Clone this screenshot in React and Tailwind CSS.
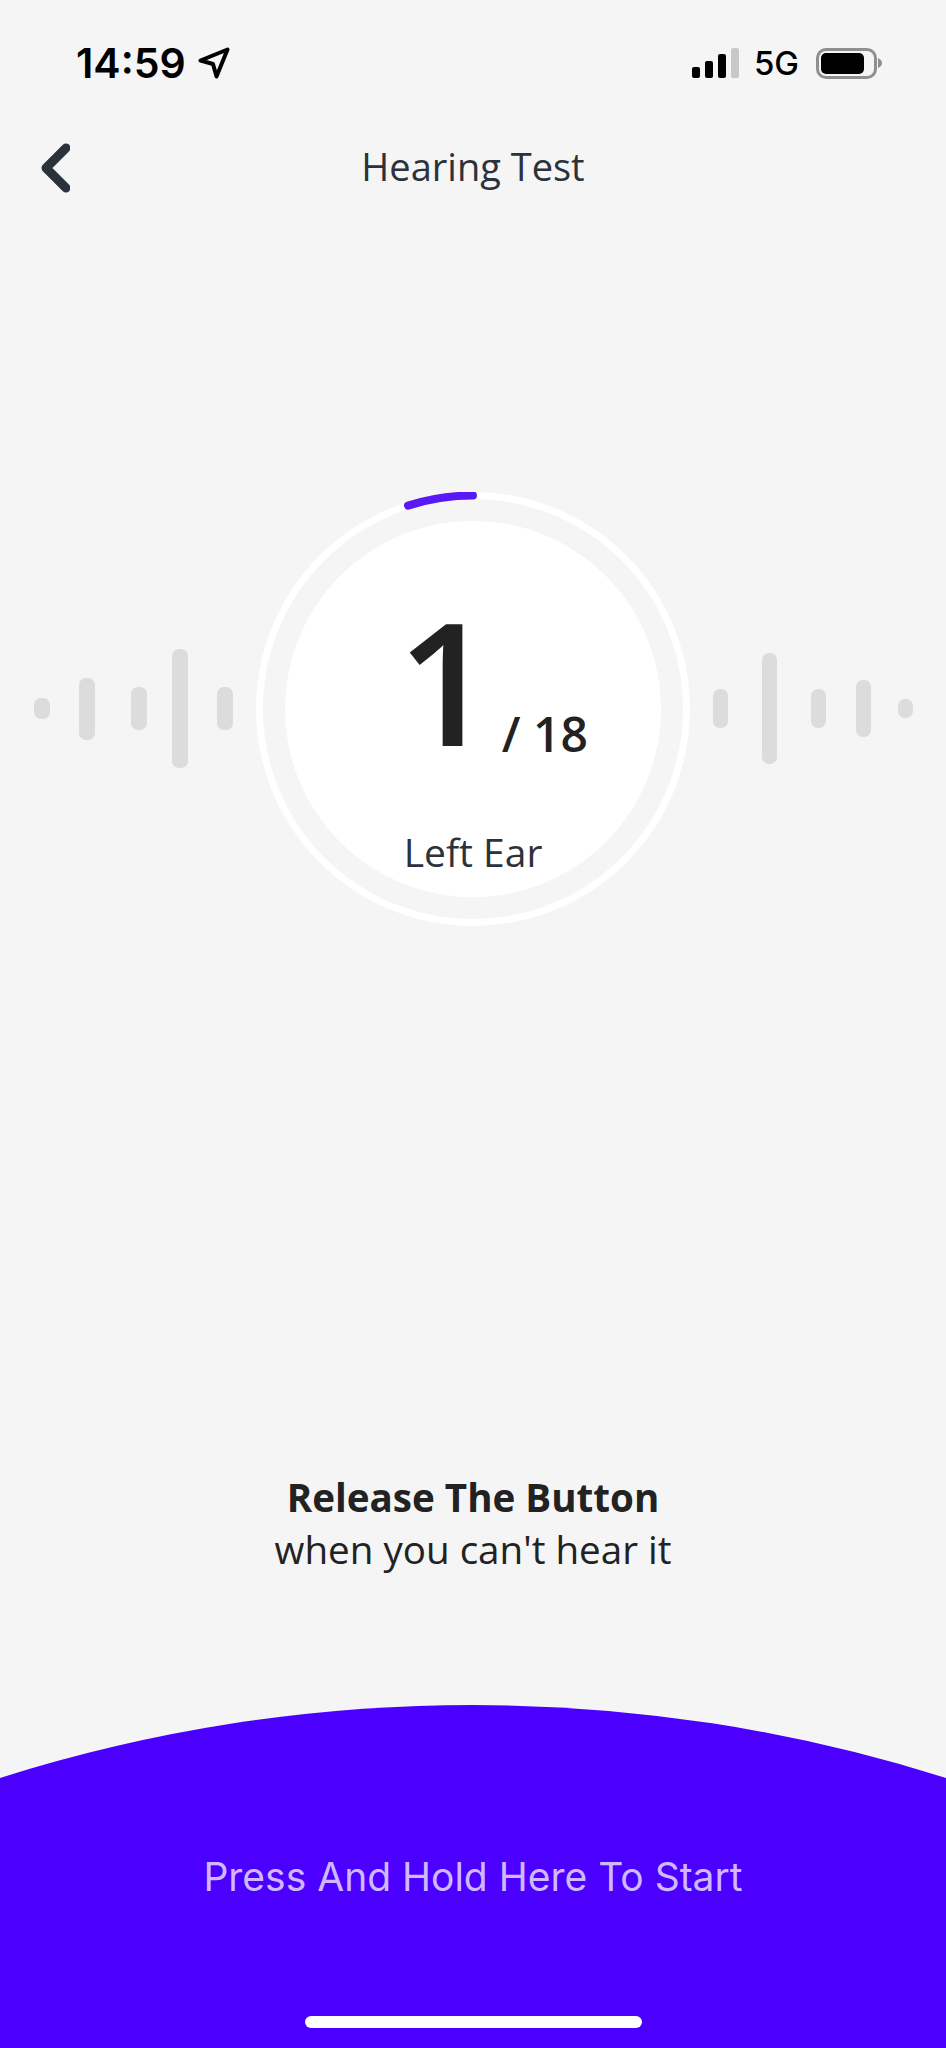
const leftBars = [
  "ml-0 h-[21px]",
  "ml-[29px] h-[62px]",
  "ml-[36px] h-[43px]",
  "ml-[25px] h-[119px]",
  "ml-[29px] h-[43px]",
];

const rightBars = [
  "ml-0 h-[39px]",
  "ml-[34px] h-[111px]",
  "ml-[34px] h-[39px]",
  "ml-[30px] h-[57px]",
  "ml-[27px] h-[19px]",
];

function Bars({ items, width }) {
  return (
    <div className="mb-[1px] flex items-center">
      {items.map((cls, i) => (
        <div key={i} className={`${cls} ${width} rounded-[7px] bg-[#dcdcdc]`} />
      ))}
    </div>
  );
}

function StatusBar() {
  return (
    <div className="flex h-[32px] items-center justify-between pl-[76px] pr-[64px] font-['Inter',sans-serif] text-black">
      <div className="flex items-center">
        <span className="text-[41px] font-semibold leading-none">14:59</span>
        <svg className="ml-[12px]" width="32" height="32" viewBox="0 0 32 32" fill="none">
          <path
            d="M2.5 13.5 29.5 2.5 18.5 29.5 15 17Z"
            stroke="#000"
            strokeWidth="4"
            strokeLinejoin="round"
          />
        </svg>
      </div>
      <div className="flex items-center">
        <div className="flex h-[30px] items-end gap-[5px]">
          <div className="h-[11px] w-[8px] rounded-[2px] bg-black" />
          <div className="h-[17px] w-[8px] rounded-[2px] bg-black" />
          <div className="h-[24px] w-[8px] rounded-[2px] bg-black" />
          <div className="h-[30px] w-[8px] rounded-[2px] bg-[#c8c8c8]" />
        </div>
        <span className="ml-[15px] text-[33px] font-medium leading-none">5G</span>
        <div className="ml-[17px] flex h-[31px] w-[61px] items-center rounded-[10px] border-[3px] border-[#8f8f8f] pl-[2px]">
          <div className="h-[21px] w-[43px] rounded-[5px] bg-black" />
        </div>
        <svg className="ml-[1px]" width="4" height="10" viewBox="0 0 4 10">
          <path d="M0 0C2.5 1 4 3 4 5S2.5 9 0 10Z" fill="#8f8f8f" />
        </svg>
      </div>
    </div>
  );
}

export default function App() {
  return (
    <div className="flex h-[2048px] w-[946px] flex-col overflow-hidden bg-[#f5f5f5] pt-[47px] font-['Open_Sans',sans-serif]">
      <StatusBar />

      {/* Header */}
      <div className="mt-[64px] grid h-[50px] grid-cols-[1fr_auto_1fr] items-center pl-[40px] pr-[40px]">
        <svg width="30" height="50" viewBox="0 0 30 50" fill="none">
          <path
            d="M26 5 6 25 26 45"
            stroke="#2b323b"
            strokeWidth="9"
            strokeLinecap="round"
            strokeLinejoin="round"
          />
        </svg>
        <h1 className="pb-[5px] text-[38px] font-normal leading-none text-[#2b323b]">Hearing Test</h1>
        <div />
      </div>

      {/* Progress circle with the bars on both sides */}
      <div className="mt-[299px] flex items-center pl-[34px]">
        <Bars items={leftBars} width="w-[16px]" />
        <div className="relative mx-[23px] flex h-[434px] w-[434px] shrink-0 items-center justify-center rounded-full border-[7px] border-white">
          <div className="flex h-[376px] w-[376px] flex-col items-center rounded-full bg-white pt-[73px]">
            <div className="flex items-baseline pl-[39px] text-[#222222]">
              <span className="text-[171px] font-semibold leading-none">1</span>
              <span className="ml-[7px] translate-y-[6px] text-[48px] font-semibold leading-none">/ 18</span>
            </div>
            <div className="mt-[67px] text-[39px] leading-none text-[#2b323b]">Left Ear</div>
          </div>
          <svg className="absolute left-[-7px] top-[-7px]" width="434" height="434" viewBox="0 0 434 434" fill="none">
            <path
              d="M152 13.6A213.5 213.5 0 0 1 217 3.5"
              stroke="#5b18f7"
              strokeWidth="8"
              strokeLinecap="round"
            />
          </svg>
        </div>
        <Bars items={rightBars} width="w-[15px]" />
      </div>

      {/* Instruction */}
      <div className="mt-[545px] text-center text-[38.6px] leading-[52px] text-[#222222]">
        <div className="font-bold">Release The Button</div>
        <div>when you can't hear it</div>
      </div>

      {/* Hold area */}
      <div className="mt-auto">
        <svg className="block" width="946" height="73" viewBox="0 0 946 73">
          <path d="M0 73A1569 1569 0 0 1 946 73Z" fill="#4b00ff" />
        </svg>
        <div className="flex h-[270px] flex-col items-center bg-[#4b00ff] font-['Inter',sans-serif]">
          <div className="mt-[79px] text-[39px] leading-none text-[#d0b8ff]">Press And Hold Here To Start</div>
          <div className="mt-[120px] h-[12px] w-[337px] rounded-full bg-white" />
        </div>
      </div>
    </div>
  );
}
